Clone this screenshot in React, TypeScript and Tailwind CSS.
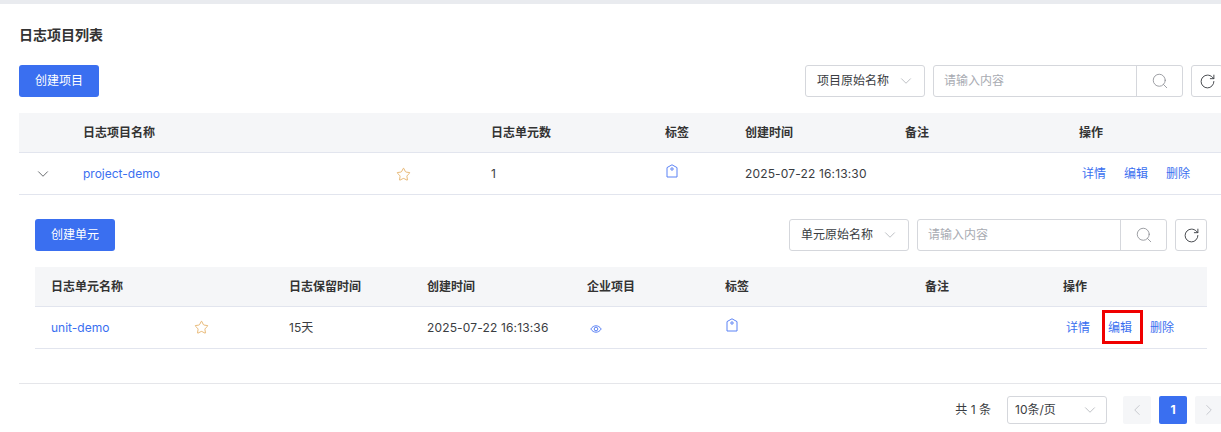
import { ChevronDown, ChevronLeft, ChevronRight, RotateCw, Search, Star } from "lucide-react";

const FONT = "font-['Inter','Noto_Sans_CJK_SC',sans-serif]";

function TagIcon() {
  return (
    <svg width="12" height="14" viewBox="0 0 12 14" fill="none" stroke="#5b82f5" strokeWidth="1">
      <path d="M1 3.600 6 .8l5 2.800v9.400H1z" />
      <circle cx="6" cy="5" r="1.200" />
    </svg>
  );
}

function EyeIcon() {
  return (
    <svg width="12" height="10" viewBox="0 0 12 10" fill="none" stroke="#5b82f5" strokeWidth="1">
      <path d="M.8 5C2.200 2.800 4 1.800 6 1.800s3.800 1 5.200 3.200C9.800 7.200 8 8.200 6 8.200S2.200 7.200.8 5z" />
      <circle cx="6" cy="5" r="1.800" />
    </svg>
  );
}

function Toolbar({ button, field }: { button: string; field: string }) {
  return (
    <div className="flex items-center justify-between">
      <button className="h-8 w-20 rounded-[3px] bg-[#3a6ff0] text-xs text-white">{button}</button>
      <div className="flex items-center">
        <div className="flex h-8 w-[120px] items-center justify-between rounded-[3px] border border-[#d5d7dc] pl-[11px] pr-[9px] text-xs text-[#3a3d42]">
          <span>{field}</span>
          <ChevronDown size={18} strokeWidth={1} className="text-[#a8abb2]" />
        </div>
        <div className="ml-2 flex h-8 w-[250px] items-center rounded-[3px] border border-[#d5d7dc] text-xs text-[#a8abb2]">
          <span className="flex-1 pl-[10px]">请输入内容</span>
          <span className="flex h-full w-[46px] items-center justify-center border-l border-[#d5d7dc]">
            <Search size={18} strokeWidth={1.100} className="text-[#8a8d93]" />
          </span>
        </div>
        <div className="ml-2 flex h-8 w-8 items-center justify-center rounded-[3px] border border-[#d5d7dc]">
          <RotateCw size={17} strokeWidth={1.300} className="text-[#3a3d42]" />
        </div>
      </div>
    </div>
  );
}

function Actions({ highlighted }: { highlighted?: boolean }) {
  return (
    <div className="flex gap-[18px] pt-px text-xs text-[#3a6ff0]">
      <span>详情</span>
      <span className="relative">
        编辑
        {highlighted && <span className="absolute -left-[6px] -top-[10px] h-[34px] w-[41px] border-[3px] border-[#f00000]" />}
      </span>
      <span>删除</span>
    </div>
  );
}

function Favorite() {
  return <Star size={15} strokeWidth={1.100} className="text-[#dd9a3c]" />;
}

export default function App() {
  return (
    <div className={`h-[432px] w-[1221px] overflow-hidden bg-white ${FONT}`}>
      <div className="h-1 bg-[#e9ebef]" />
      <div className="ml-[19px] w-[1204px]">
        <h1 className="mt-[22px] text-sm leading-[18px] font-semibold text-[#333]">日志项目列表</h1>
        <div className="mt-[21px]">
          <Toolbar button="创建项目" field="项目原始名称" />
        </div>

        <div className="mt-4 grid h-10 grid-cols-[64px_408px_174px_80px_160px_174px_144px] items-center border-b border-[#e2e5ee] bg-[#f5f6f8] text-xs font-semibold text-[#333]">
          <span />
          <span>日志项目名称</span>
          <span>日志单元数</span>
          <span>标签</span>
          <span>创建时间</span>
          <span>备注</span>
          <span>操作</span>
        </div>
        <div className="grid h-[42px] grid-cols-[64px_408px_174px_80px_160px_174px_144px] items-center border-b border-[#e2e5ee] text-xs text-[#3a3d42]">
          <span className="pl-[15px]"><ChevronDown size={18} strokeWidth={1} /></span>
          <div className="flex items-center justify-between pr-[80px]">
            <span className="text-[#3a6ff0]">project-demo</span>
            <span className="mt-px"><Favorite /></span>
          </div>
          <span>1</span>
          <span className="-mt-[6px] pl-px"><TagIcon /></span>
          <span className="tracking-[0.15px]">2025-07-22 16:13:30</span>
          <span />
          <div className="pl-[3px]"><Actions /></div>
        </div>

        <div className="mx-4 mt-6 pb-[34px]">
          <Toolbar button="创建单元" field="单元原始名称" />
          <div className="mt-4 grid h-10 grid-cols-[254px_138px_160px_138px_200px_138px_144px] items-center border-b border-[#e2e5ee] bg-[#f5f6f8] text-xs font-semibold text-[#333] [&>*:first-child]:pl-[16px]">
            <span>日志单元名称</span>
            <span>日志保留时间</span>
            <span>创建时间</span>
            <span>企业项目</span>
            <span>标签</span>
            <span>备注</span>
            <span>操作</span>
          </div>
          <div className="grid h-[42px] grid-cols-[254px_138px_160px_138px_200px_138px_144px] items-center border-b border-[#e2e5ee] text-xs text-[#3a3d42]">
            <div className="flex items-center justify-between pl-[16px] pr-[80px]">
              <span className="text-[#3a6ff0]">unit-demo</span>
              <Favorite />
            </div>
            <span>15天</span>
            <span className="tracking-[0.15px]">2025-07-22 16:13:36</span>
            <span className="pl-[3px] pt-[2px]"><EyeIcon /></span>
            <span className="-mt-[6px] pl-px"><TagIcon /></span>
            <span />
            <div className="pl-[3px]"><Actions highlighted /></div>
          </div>
        </div>

        <div className="flex h-[49px] items-start justify-end border-t border-[#e5e6ea] pt-3 text-xs text-[#3a3d42]">
          <div className="flex items-center">
            <span className="mr-[16px]">共 1 条</span>
            <div className="flex h-7 w-[100px] items-center justify-between rounded-[3px] border border-[#d5d7dc] pl-[7px] pr-[7px]">
              <span>10条/页</span>
              <ChevronDown size={18} strokeWidth={1} className="text-[#a8abb2]" />
            </div>
            <span className="ml-4 flex h-7 w-7 items-center justify-center rounded-[2px] bg-[#f5f6f8] text-[#b8bbc2]"><ChevronLeft size={18} strokeWidth={1} /></span>
            <span className="ml-2 flex h-7 w-7 items-center justify-center rounded-[2px] bg-[#3a6ff0] font-bold text-white">1</span>
            <span className="ml-2 flex h-7 w-7 items-center justify-center rounded-[2px] bg-[#f5f6f8] text-[#b8bbc2]"><ChevronRight size={18} strokeWidth={1} /></span>
          </div>
        </div>
      </div>
    </div>
  );
}
